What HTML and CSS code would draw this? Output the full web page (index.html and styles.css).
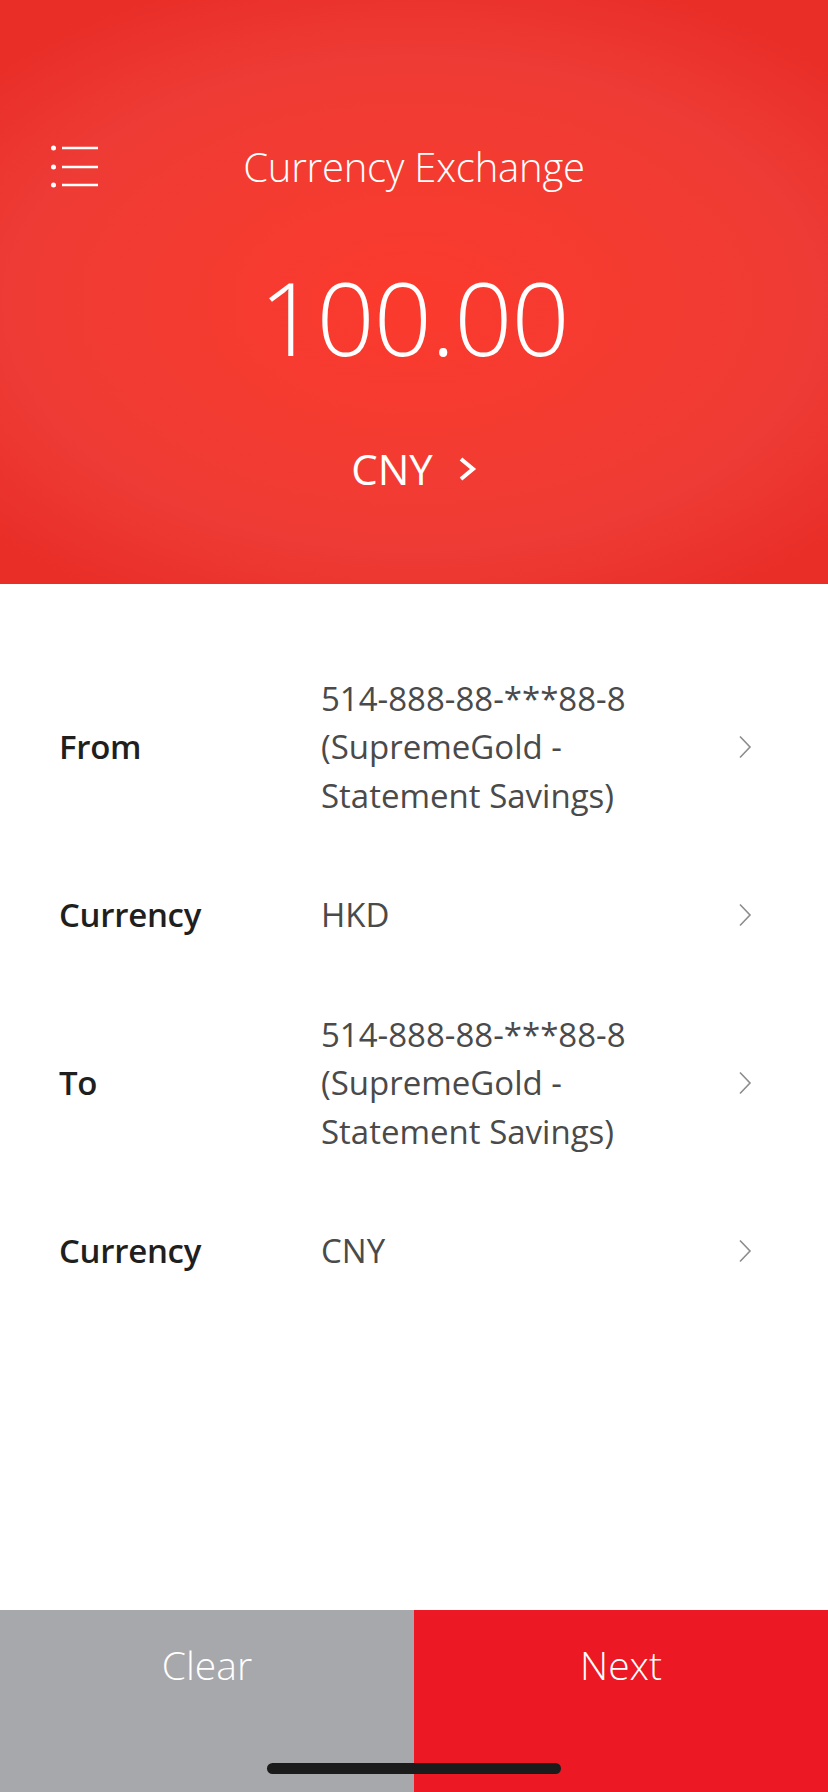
FILE: index.html
```html
<!DOCTYPE html>
<html lang="en">
<head>
    <meta charset="UTF-8">
    <meta name="viewport" content="width=device-width, initial-scale=1.0">
    <title>Currency Exchange</title>
    <link rel="stylesheet" href="styles.css">
</head>
<body>
    <header class="hero">
        <div class="topbar">
            <button class="menu" type="button" aria-label="Menu">
                <svg width="48" height="44" viewBox="0 0 48 44">
                    <circle cx="2.5" cy="3" r="2.5" fill="#fff"/>
                    <circle cx="2.5" cy="22" r="2.5" fill="#fff"/>
                    <circle cx="2.5" cy="40" r="2.5" fill="#fff"/>
                    <path d="M11 3H47M11 22H47M11 40H47" stroke="#fff" stroke-width="2.5"/>
                </svg>
            </button>
            <h1 class="title">Currency Exchange</h1>
        </div>
        <div class="amount">100.00</div>
        <div class="currency-pick">
            <span>CNY</span>
            <svg width="20" height="26" viewBox="0 0 20 26">
                <polyline points="4,3 16,13 4,23" fill="none" stroke="#fff" stroke-width="4"/>
            </svg>
        </div>
    </header>

    <main class="details">
        <div class="row">
            <div class="label">From</div>
            <div class="value">514-888-88-***88-8<br>(SupremeGold -<br>Statement Savings)</div>
            <svg class="chev" width="14" height="24" viewBox="0 0 14 24">
                <polyline points="2,1.5 12,12 2,22.5" fill="none" stroke="#8c8c8c" stroke-width="1.6"/>
            </svg>
        </div>
        <div class="row">
            <div class="label">Currency</div>
            <div class="value">HKD</div>
            <svg class="chev" width="14" height="24" viewBox="0 0 14 24">
                <polyline points="2,1.5 12,12 2,22.5" fill="none" stroke="#8c8c8c" stroke-width="1.6"/>
            </svg>
        </div>
        <div class="row">
            <div class="label">To</div>
            <div class="value">514-888-88-***88-8<br>(SupremeGold -<br>Statement Savings)</div>
            <svg class="chev" width="14" height="24" viewBox="0 0 14 24">
                <polyline points="2,1.5 12,12 2,22.5" fill="none" stroke="#8c8c8c" stroke-width="1.6"/>
            </svg>
        </div>
        <div class="row">
            <div class="label">Currency</div>
            <div class="value">CNY</div>
            <svg class="chev" width="14" height="24" viewBox="0 0 14 24">
                <polyline points="2,1.5 12,12 2,22.5" fill="none" stroke="#8c8c8c" stroke-width="1.6"/>
            </svg>
        </div>
    </main>

    <footer class="actions">
        <button class="btn btn-clear" type="button">Clear</button>
        <button class="btn btn-next" type="button">Next</button>
        <div class="home-bar"></div>
    </footer>
</body>
</html>
```

FILE: styles.css
```css
* {
    box-sizing: border-box;
}
body {
    margin: 0;
    width: 828px;
    min-height: 1792px;
    display: flex;
    flex-direction: column;
    font-family: "Open Sans", "Liberation Sans", sans-serif;
    background: #fff;
}
button {
    font-family: inherit;
    border: none;
    padding: 0;
    margin: 0;
    background: none;
    cursor: pointer;
}

/* red header */
.hero {
    height: 584px;
    padding-top: 143px;
    display: flex;
    flex-direction: column;
    align-items: center;
    color: #fff;
    background: radial-gradient(ellipse 70% 60% at 50% 52%, #fb3a2d 0%, #f43b31 40%, #ee3b35 70%, #e92d27 100%);
}
.topbar {
    width: 100%;
    height: 48px;
    display: grid;
    grid-template-columns: 1fr auto 1fr;
    align-items: center;
}
.menu {
    justify-self: start;
    margin-left: 51px;
    display: flex;
}
.title {
    margin: 0;
    font-size: 40px;
    font-weight: 300;
    line-height: 48px;
    letter-spacing: -0.2px;
}
.amount {
    margin-top: 66px;
    font-size: 102px;
    font-weight: 300;
    line-height: 120px;
    letter-spacing: -1px;
}
.currency-pick {
    margin-top: 68px;
    display: flex;
    align-items: center;
    gap: 24px;
    font-size: 42px;
    line-height: 48px;
}

/* account rows */
.details {
    flex: 1;
    padding-top: 55px;
}
.row {
    display: grid;
    grid-template-columns: 262px 1fr 14px;
    align-items: center;
    padding: 35.5px 76px 35.5px 59px;
}
.label {
    font-size: 33px;
    font-weight: 600;
    color: #1f1f1f;
    line-height: 48.5px;
    letter-spacing: -0.3px;
}
.value {
    font-size: 33px;
    color: #4a4a4a;
    line-height: 48.5px;
}

/* bottom buttons */
.actions {
    position: relative;
    display: flex;
    height: 182px;
}
.btn {
    flex: 1;
    height: 100%;
    padding-bottom: 73px;
    font-size: 39px;
    font-weight: 300;
    color: #fff;
}
.btn-clear {
    background-color: #a7a8ac;
}
.btn-next {
    background-color: #ec1823;
}
.home-bar {
    position: absolute;
    left: 267px;
    bottom: 18px;
    width: 294px;
    height: 11px;
    border-radius: 6px;
    background: #1b1b1b;
}
```
